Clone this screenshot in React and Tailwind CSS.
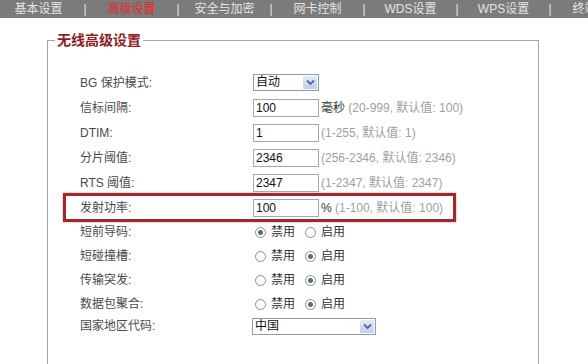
import React from "react";

const font = { fontFamily: '"Liberation Sans","Noto Sans CJK SC",sans-serif' };

function Chevron() {
  return (
    <svg width="9" height="7" viewBox="0 0 9 7" fill="none">
      <path d="M1 1.5 L4.5 5 L8 1.5" stroke="#4a6aa0" strokeWidth="1.8" />
    </svg>
  );
}

function Select({ value, w }) {
  return (
    <div className={`flex h-[17px] border border-[#8f9aa5] bg-white ${w}`}>
      <div className="flex-1 pl-[2px] text-[12px] leading-[15px] text-[#111]">{value}</div>
      <div className="m-[1px] flex w-[14px] items-center justify-center rounded-[1px] bg-gradient-to-b from-[#e3ebf9] to-[#bccdef]">
        <Chevron />
      </div>
    </div>
  );
}

function TextBox({ value }) {
  return (
    <div className="flex h-[18px] w-[66px] items-center border border-[#a2aab0] bg-white pl-[2px] text-[12px] text-[#111]">
      {value}
    </div>
  );
}

function Radio({ checked }) {
  return (
    <span className="flex h-[11px] w-[11px] items-center justify-center rounded-full border border-[#8d8d8d] bg-white">
      {checked && <span className="h-[5px] w-[5px] rounded-full bg-[#4b7a52]" />}
    </span>
  );
}

function RadioPair({ first }) {
  return (
    <div className="flex items-center text-[12px] text-[#333]">
      <span className="ml-[2px]"><Radio checked={first} /></span>
      <span className="ml-[5px]">禁用</span>
      <span className="ml-[10px]"><Radio checked={!first} /></span>
      <span className="ml-[5px]">启用</span>
    </div>
  );
}

function Row({ label, children, h = "h-[25px]" }) {
  return (
    <div className={`flex items-center pl-[32px] ${h}`}>
      <div className="w-[173px] text-[12px] text-[#4a4a4a]">{label}</div>
      {children}
    </div>
  );
}

function Hint({ dark, children }) {
  return (
    <span className="ml-[2px] text-[12px] text-[#a0a0a0] whitespace-nowrap">
      {dark && <span className="text-[#333]">{dark}</span>}
      {children}
    </span>
  );
}

export default function App() {
  const nav = ["基本设置", "高级设置", "安全与加密", "网卡控制", "WDS设置", "WPS设置", "终端管理"];
  return (
    <div className="h-[364px] w-[588px] overflow-hidden bg-white" style={font}>
      <div className="flex h-[18px] items-center whitespace-nowrap bg-[#7b7b7b] pl-[3px] text-[12px] text-[#e4e4e4]">
        {nav.map((n, i) => (
          <React.Fragment key={n}>
            <div className={`w-[71px] shrink-0 text-center ${i === 1 ? "text-[#e8262a]" : ""}`}>{n}</div>
            {i < nav.length - 1 && <div className="w-[22px] shrink-0 text-center">|</div>}
          </React.Fragment>
        ))}
      </div>

      <fieldset className="ml-[47px] mt-[14px] h-[400px] w-[492px] border border-b-0 border-[#a6a6a6] pt-[22px]">
        <legend className="ml-[7px] px-[2px] text-[14px] font-bold leading-[16px] text-[#8e1d1f]">无线高级设置</legend>

        <Row label="BG 保护模式:">
          <Select value="自动" w="w-[66px]" />
        </Row>
        <Row label="信标间隔:">
          <TextBox value="100" />
          <Hint dark="毫秒 ">(20-999, 默认值: 100)</Hint>
        </Row>
        <Row label="DTIM:">
          <TextBox value="1" />
          <Hint>(1-255, 默认值: 1)</Hint>
        </Row>
        <Row label="分片阈值:">
          <TextBox value="2346" />
          <Hint>(256-2346, 默认值: 2346)</Hint>
        </Row>
        <Row label="RTS 阈值:">
          <TextBox value="2347" />
          <Hint>(1-2347, 默认值: 2347)</Hint>
        </Row>
        <div className="-my-[2px] ml-[15px] flex h-[29px] w-[393px] items-center border-[3px] border-[#a2282d] pl-[14px] shadow-[0_0_2px_rgba(150,30,30,0.5)]">
          <div className="w-[173px] text-[12px] text-[#4a4a4a]">发射功率:</div>
          <TextBox value="100" />
          <Hint dark="% ">(1-100, 默认值: 100)</Hint>
        </div>
        <Row label="短前导码:" h="h-[24px]">
          <RadioPair first={true} />
        </Row>
        <Row label="短碰撞槽:" h="h-[24px]">
          <RadioPair first={false} />
        </Row>
        <Row label="传输突发:" h="h-[24px]">
          <RadioPair first={false} />
        </Row>
        <Row label="数据包聚合:" h="h-[24px]">
          <RadioPair first={false} />
        </Row>
        <Row label="国家地区代码:" h="h-[20px]">
          <Select value="中国" w="w-[124px] -ml-px" />
        </Row>
      </fieldset>
    </div>
  );
}
